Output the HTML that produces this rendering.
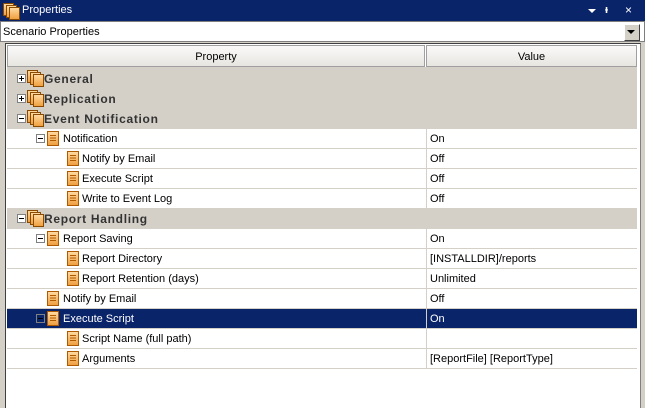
<!DOCTYPE html><html><head><style>
body{margin:0;width:645px;height:408px;background:#d4d0c8;position:relative;overflow:hidden;font-family:"Liberation Sans",Tahoma,sans-serif;font-size:11px;color:#000}
.a{position:absolute}
.row{position:absolute;left:7px;width:630px;height:19px;border-bottom:1px solid #d4d0c8;background:#fff}
.cat{background:#d4d0c8;font-weight:bold;font-size:12px;color:#333;letter-spacing:.7px}
.sel{background:#0a246a;color:#fff}
.t{position:absolute;top:4px;white-space:nowrap}
.cat .t{top:3px}
.v{position:absolute;left:419px;top:1px;height:19px;border-left:1px solid #d4d0c8;padding-left:3px;line-height:19px;width:200px;top:0}
.v span{position:relative;top:1px}
.box{position:absolute;top:5px;width:7px;height:7px;border:1px solid #808080;background:#fff}
.box::after{content:"";position:absolute;left:1px;top:3px;width:5px;height:1px;background:#000}
.plus::before{content:"";position:absolute;left:3px;top:1px;width:1px;height:5px;background:#000}
.ic{position:absolute;top:2px;width:10px;height:13px;background:linear-gradient(#ffd9a0,#f0a040);border:1px solid #b05a00}
.ic::after{content:"";position:absolute;left:2px;top:3px;width:6px;height:6px;background:repeating-linear-gradient(#b05a00 0 1px,transparent 1px 2.5px)}
.ci{position:absolute;top:1px;width:16px;height:16px}
.ci i{position:absolute;width:9px;height:11px;background:linear-gradient(#ffd9a0,#f0a040);border:1px solid #8a4a00}
</style></head><body>
<div class="a" style="left:0;top:0;width:645px;height:21px;background:#0a246a"></div>
<div class="ci" style="left:3px;top:3px"><i style="left:0;top:0"></i><i style="left:3px;top:2px"></i><i style="left:6px;top:4px"></i></div>
<div class="a" style="left:22px;top:4px;color:#fff;font-size:11px">Properties</div>
<div class="a" style="left:588px;top:9px;width:0;height:0;border-left:4px solid transparent;border-right:4px solid transparent;border-top:4px solid #fff"></div>
<div class="a" style="left:605px;top:4px;color:#fff;font-size:11px;font-weight:bold">ᵻ</div>
<div class="a" style="left:625px;top:3px;color:#fff;font-size:12px">×</div>
<div class="a" style="left:0;top:21px;width:643px;height:19px;background:#fff;border:1px solid #7f7f7f"></div>
<div class="a" style="left:3px;top:26px">Scenario Properties</div>
<div class="a" style="left:624px;top:24px;width:14px;height:15px;background:#d4d0c8;border:1px solid #fff;border-right-color:#404040;border-bottom-color:#404040"></div>
<div class="a" style="left:627px;top:30px;width:0;height:0;border-left:4px solid transparent;border-right:4px solid transparent;border-top:4px solid #000"></div>
<div class="a" style="left:5px;top:43px;width:634px;height:364px;background:#fff;border-left:1px solid #404040;border-top:1px solid #404040;border-right:1px solid #808080"></div>
<div class="a" style="left:7px;top:45px;width:416px;height:20px;background:linear-gradient(#fafafa,#e8e6e0);border:1px solid #a0a0a0;text-align:center;line-height:22px">Property</div>
<div class="a" style="left:426px;top:45px;width:209px;height:20px;background:linear-gradient(#fafafa,#e8e6e0);border:1px solid #a0a0a0;text-align:center;line-height:22px">Value</div>
<div class="a" style="left:7px;top:67px;width:630px;height:2px;background:#d4d0c8"></div>

<div class="row cat" style="top:69px"><div class="box plus" style="left:10px"></div><div class="ci" style="left:20px"><i style="left:0;top:0"></i><i style="left:3px;top:2px"></i><i style="left:6px;top:4px"></i></div><span class="t" style="left:37px">General</span></div>
<div class="row cat" style="top:89px"><div class="box plus" style="left:10px"></div><div class="ci" style="left:20px"><i style="left:0;top:0"></i><i style="left:3px;top:2px"></i><i style="left:6px;top:4px"></i></div><span class="t" style="left:37px">Replication</span></div>
<div class="row cat" style="top:109px"><div class="box" style="left:10px"></div><div class="ci" style="left:20px"><i style="left:0;top:0"></i><i style="left:3px;top:2px"></i><i style="left:6px;top:4px"></i></div><span class="t" style="left:37px">Event Notification</span></div>
<div class="row" style="top:129px"><div class="box" style="left:29px"></div><div class="ic" style="left:40px"></div><span class="t" style="left:56px">Notification</span><div class="v"><span>On</span></div></div>
<div class="row" style="top:149px"><div class="ic" style="left:60px"></div><span class="t" style="left:75px">Notify by Email</span><div class="v"><span>Off</span></div></div>
<div class="row" style="top:169px"><div class="ic" style="left:60px"></div><span class="t" style="left:75px">Execute Script</span><div class="v"><span>Off</span></div></div>
<div class="row" style="top:189px"><div class="ic" style="left:60px"></div><span class="t" style="left:75px">Write to Event Log</span><div class="v"><span>Off</span></div></div>
<div class="row cat" style="top:209px"><div class="box" style="left:10px"></div><div class="ci" style="left:20px"><i style="left:0;top:0"></i><i style="left:3px;top:2px"></i><i style="left:6px;top:4px"></i></div><span class="t" style="left:37px">Report Handling</span></div>
<div class="row" style="top:229px"><div class="box" style="left:29px"></div><div class="ic" style="left:40px"></div><span class="t" style="left:56px">Report Saving</span><div class="v"><span>On</span></div></div>
<div class="row" style="top:249px"><div class="ic" style="left:60px"></div><span class="t" style="left:75px">Report Directory</span><div class="v"><span>[INSTALLDIR]/reports</span></div></div>
<div class="row" style="top:269px"><div class="ic" style="left:60px"></div><span class="t" style="left:75px">Report Retention (days)</span><div class="v"><span>Unlimited</span></div></div>
<div class="row" style="top:289px"><div class="ic" style="left:40px"></div><span class="t" style="left:56px">Notify by Email</span><div class="v"><span>Off</span></div></div>
<div class="row sel" style="top:309px"><div class="box" style="left:29px;background:#0a246a"></div><div class="ic" style="left:40px"></div><span class="t" style="left:56px">Execute Script</span><div class="v"><span>On</span></div></div>
<div class="row" style="top:329px"><div class="ic" style="left:60px"></div><span class="t" style="left:75px">Script Name (full path)</span><div class="v"></div></div>
<div class="row" style="top:349px"><div class="ic" style="left:60px"></div><span class="t" style="left:75px">Arguments</span><div class="v"><span>[ReportFile] [ReportType]</span></div></div>
</body></html>
